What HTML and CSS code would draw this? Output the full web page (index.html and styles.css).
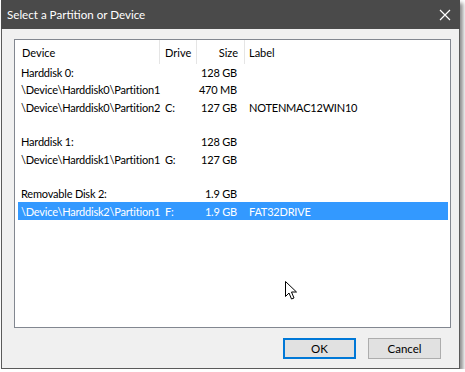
FILE: index.html
```html
<!DOCTYPE html>
<html lang="en">
<head>
    <meta charset="UTF-8">
    <title>Select a Partition or Device</title>
    <link rel="stylesheet" href="styles.css">
</head>
<body>
    <div class="dialog">
        <div class="titlebar">
            <span class="title">Select a Partition or Device</span>
            <svg class="close" width="12" height="12" viewBox="0 0 12 12">
                <path d="M1 1 L11 11 M11 1 L1 11" stroke="#fff" stroke-width="1.2" fill="none"/>
            </svg>
        </div>
        <div class="content">
            <div class="listbox">
                <div class="list-header">
                    <div class="hcol hcol-device">Device</div>
                    <div class="hcol hcol-drive">Drive</div>
                    <div class="hcol hcol-size">Size</div>
                    <div class="hcol hcol-label">Label</div>
                </div>
                <div class="row">
                    <span class="c-device">Harddisk 0:</span><span class="c-drive"></span><span class="c-size">128 GB</span><span class="c-label"></span>
                </div>
                <div class="row">
                    <span class="c-device">\Device\Harddisk0\Partition1</span><span class="c-drive"></span><span class="c-size">470 MB</span><span class="c-label"></span>
                </div>
                <div class="row">
                    <span class="c-device">\Device\Harddisk0\Partition2</span><span class="c-drive">C:</span><span class="c-size">127 GB</span><span class="c-label">NOTENMAC12WIN10</span>
                </div>
                <div class="row"></div>
                <div class="row">
                    <span class="c-device">Harddisk 1:</span><span class="c-drive"></span><span class="c-size">128 GB</span><span class="c-label"></span>
                </div>
                <div class="row">
                    <span class="c-device">\Device\Harddisk1\Partition1</span><span class="c-drive">G:</span><span class="c-size">127 GB</span><span class="c-label"></span>
                </div>
                <div class="row"></div>
                <div class="row">
                    <span class="c-device">Removable Disk 2:</span><span class="c-drive"></span><span class="c-size">1.9 GB</span><span class="c-label"></span>
                </div>
                <div class="row selected">
                    <span class="c-device">\Device\Harddisk2\Partition1</span><span class="c-drive">F:</span><span class="c-size">1.9 GB</span><span class="c-label">FAT32DRIVE</span>
                </div>
            </div>
            <div class="buttons">
                <button class="btn btn-default">OK</button>
                <button class="btn">Cancel</button>
            </div>
        </div>
        <svg class="cursor" width="14" height="21" viewBox="0 0 14 21">
            <path d="M0.5 0.5 L0.5 15.5 L4 12 L6.5 18 L9 17 L6.5 11 L11.5 11 Z" fill="#fff" stroke="#000" stroke-width="1"/>
        </svg>
    </div>
</body>
</html>
```

FILE: styles.css
```css
* {
	box-sizing: border-box;
}
body {
	margin: 0;
	background: #ffffff;
	font-family: Lato, "Liberation Sans", sans-serif;
	font-size: 11px;
	color: #000;
}
.dialog {
	position: relative;
	margin: 0 0 0 1px;
	width: 459px;
	height: 369px;
	background: #f0f0f0;
	border: 1px solid #5a5a5a;
	border-top: none;
	box-shadow: 3px 3px 4px rgba(0, 0, 0, 0.45);
}
.titlebar {
	display: flex;
	align-items: center;
	justify-content: space-between;
	height: 29px;
	margin: 0 -1px;
	padding: 0 9px 0 6px;
	background: #4a4a4a;
	color: #ffffff;
}
.title {
	font-size: 11.6px;
}
.content {
	padding: 10px 8px 0 12px;
}
.listbox {
	height: 289px;
	width: 437px;
	background: #ffffff;
	border: 1px solid #828790;
}
.list-header {
	display: grid;
	grid-template-columns: 145px 37px 48px 1fr;
	height: 24px;
}
.hcol {
	display: flex;
	align-items: center;
	border-right: 1px solid #e5e5e5;
}
.hcol-device {
	padding-left: 7px;
}
.hcol-drive {
	padding-left: 5px;
}
.hcol-size {
	justify-content: flex-end;
	padding-right: 6px;
}
.hcol-label {
	padding-left: 4px;
	border-right: none;
}
.row {
	display: grid;
	grid-template-columns: 141px 37px 48px 1fr;
	height: 17.3px;
	margin: 0 2px 0 3px;
	align-items: center;
	white-space: nowrap;
	letter-spacing: -0.2px;
}
.row > span {
	min-width: 0;
	overflow: visible;
}
.row.selected {
	background: #3399ff;
	color: #ffffff;
}
.c-device {
	padding-left: 3px;
}
.c-drive {
	padding-left: 6px;
}
.c-size {
	text-align: right;
	padding-right: 7px;
}
.c-label {
	padding-left: 5px;
}
.buttons {
	display: flex;
	justify-content: flex-end;
	gap: 12px;
	padding: 10px 10px 0 0;
}
.btn {
	width: 73px;
	height: 21px;
	font-family: inherit;
	font-size: 11.5px;
	background: #e1e1e1;
	border: 1px solid #adadad;
	padding: 0;
	color: #000;
}
.btn-default {
	border: 2px solid #0078d7;
}
.cursor {
	position: absolute;
	left: 283px;
	top: 281px;
}
```
